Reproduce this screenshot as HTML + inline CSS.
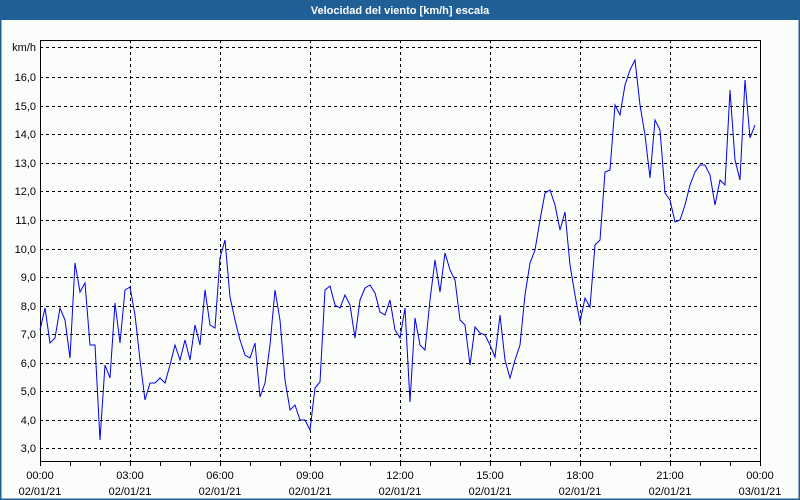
<!DOCTYPE html>
<html><head><meta charset="utf-8"><style>
html,body{margin:0;padding:0;width:800px;height:500px;overflow:hidden;background:#fbfdfb;}
svg{display:block}
text{font-family:"Liberation Sans",sans-serif;font-size:11px;fill:#000}
</style></head><body>
<svg width="800" height="500" viewBox="0 0 800 500">
<rect x="0" y="0" width="800" height="500" fill="#fbfdfb"/>
<rect x="0.5" y="0.5" width="799" height="499" fill="none" stroke="#1f5f96" stroke-width="2"/>
<rect x="0" y="0" width="800" height="20" fill="#1f5f96"/>
<text x="400" y="14" text-anchor="middle" style="fill:#fff;font-weight:bold;font-size:11px">Velocidad del viento [km/h] escala</text>
<g stroke="#000" stroke-dasharray="3,3" stroke-width="1">
<line x1="40" y1="47.5" x2="760" y2="47.5"/>
<line x1="40" y1="77.5" x2="760" y2="77.5"/>
<line x1="40" y1="106.5" x2="760" y2="106.5"/>
<line x1="40" y1="134.5" x2="760" y2="134.5"/>
<line x1="40" y1="163.5" x2="760" y2="163.5"/>
<line x1="40" y1="191.5" x2="760" y2="191.5"/>
<line x1="40" y1="220.5" x2="760" y2="220.5"/>
<line x1="40" y1="249.5" x2="760" y2="249.5"/>
<line x1="40" y1="277.5" x2="760" y2="277.5"/>
<line x1="40" y1="306.5" x2="760" y2="306.5"/>
<line x1="40" y1="334.5" x2="760" y2="334.5"/>
<line x1="40" y1="363.5" x2="760" y2="363.5"/>
<line x1="40" y1="391.5" x2="760" y2="391.5"/>
<line x1="40" y1="420.5" x2="760" y2="420.5"/>
<line x1="40" y1="448.5" x2="760" y2="448.5"/>
<line x1="130.5" y1="40" x2="130.5" y2="461"/>
<line x1="220.5" y1="40" x2="220.5" y2="461"/>
<line x1="310.5" y1="40" x2="310.5" y2="461"/>
<line x1="400.5" y1="40" x2="400.5" y2="461"/>
<line x1="490.5" y1="40" x2="490.5" y2="461"/>
<line x1="580.5" y1="40" x2="580.5" y2="461"/>
<line x1="670.5" y1="40" x2="670.5" y2="461"/>
</g>
<path d="M40.5 461V40.5H760.5V461M40 461.5H761" fill="none" stroke="#000"/>
<g stroke="#000">
<path d="M40.5 461v5M70.5 461v5M100.5 461v5M130.5 461v5M160.5 461v5M190.5 461v5M220.5 461v5M250.5 461v5M280.5 461v5M310.5 461v5M340.5 461v5M370.5 461v5M400.5 461v5M430.5 461v5M460.5 461v5M490.5 461v5M520.5 461v5M550.5 461v5M580.5 461v5M610.5 461v5M640.5 461v5M670.5 461v5M700.5 461v5M730.5 461v5M760.5 461v5"/>
</g>
<g text-anchor="end">
<text x="36" y="51">km/h</text>
<text x="36" y="81">16,0</text>
<text x="36" y="110">15,0</text>
<text x="36" y="138">14,0</text>
<text x="36" y="167">13,0</text>
<text x="36" y="195">12,0</text>
<text x="36" y="224">11,0</text>
<text x="36" y="253">10,0</text>
<text x="36" y="281">9,0</text>
<text x="36" y="310">8,0</text>
<text x="36" y="338">7,0</text>
<text x="36" y="367">6,0</text>
<text x="36" y="395">5,0</text>
<text x="36" y="424">4,0</text>
<text x="36" y="452">3,0</text>
</g>
<g text-anchor="middle">
<text x="40" y="479">00:00</text><text x="40" y="495">02/01/21</text>
<text x="130" y="479">03:00</text><text x="130" y="495">02/01/21</text>
<text x="220" y="479">06:00</text><text x="220" y="495">02/01/21</text>
<text x="310" y="479">09:00</text><text x="310" y="495">02/01/21</text>
<text x="400" y="479">12:00</text><text x="400" y="495">02/01/21</text>
<text x="490" y="479">15:00</text><text x="490" y="495">02/01/21</text>
<text x="580" y="479">18:00</text><text x="580" y="495">02/01/21</text>
<text x="670" y="479">21:00</text><text x="670" y="495">02/01/21</text>
<text x="760" y="479">00:00</text><text x="760" y="495">03/01/21</text>
</g>
<polyline fill="none" stroke="#0000ee" stroke-width="1" points="40,330 45,308 50,343 55,338 60,308 65,320 70,358 75,263 80,292 85,283 90,345 95,345 100,440 105,365 110,378 115,303 120,343 125,290 130,287 135,315 140,360 145,400 150,383 155,383 160,378 165,383 170,365 175,345 180,360 185,340 190,360 195,325 200,345 205,290 210,325 215,328 220,258 225,240 230,297 235,320 240,340 245,355 250,358 255,343 260,397 265,383 270,345 275,290 280,320 285,380 290,410 295,405 300,420 305,420 310,430 315,388 320,382 325,290 330,286 335,305 340,308 345,295 350,305 355,338 360,300 365,288 370,285 375,293 380,312 385,315 390,300 395,330 400,338 405,308 410,402 415,318 420,345 425,350 430,300 435,260 440,292 445,253 450,270 455,280 460,320 465,325 470,365 475,327 480,333 485,335 490,345 495,357 500,315 505,360 510,378 515,360 520,345 525,295 530,263 535,250 540,220 545,193 550,190 555,205 560,230 565,212 570,265 575,295 580,322 585,298 590,307 595,245 600,240 605,172 610,170 615,105 620,115 625,85 630,70 635,60 640,105 645,135 650,178 655,120 660,130 665,193 670,200 675,222 680,220 685,205 690,185 695,172 700,165 705,165 710,175 715,205 720,180 725,185 730,90 735,160 740,180 745,80 750,138 755,125"/>
</svg>
</body></html>
